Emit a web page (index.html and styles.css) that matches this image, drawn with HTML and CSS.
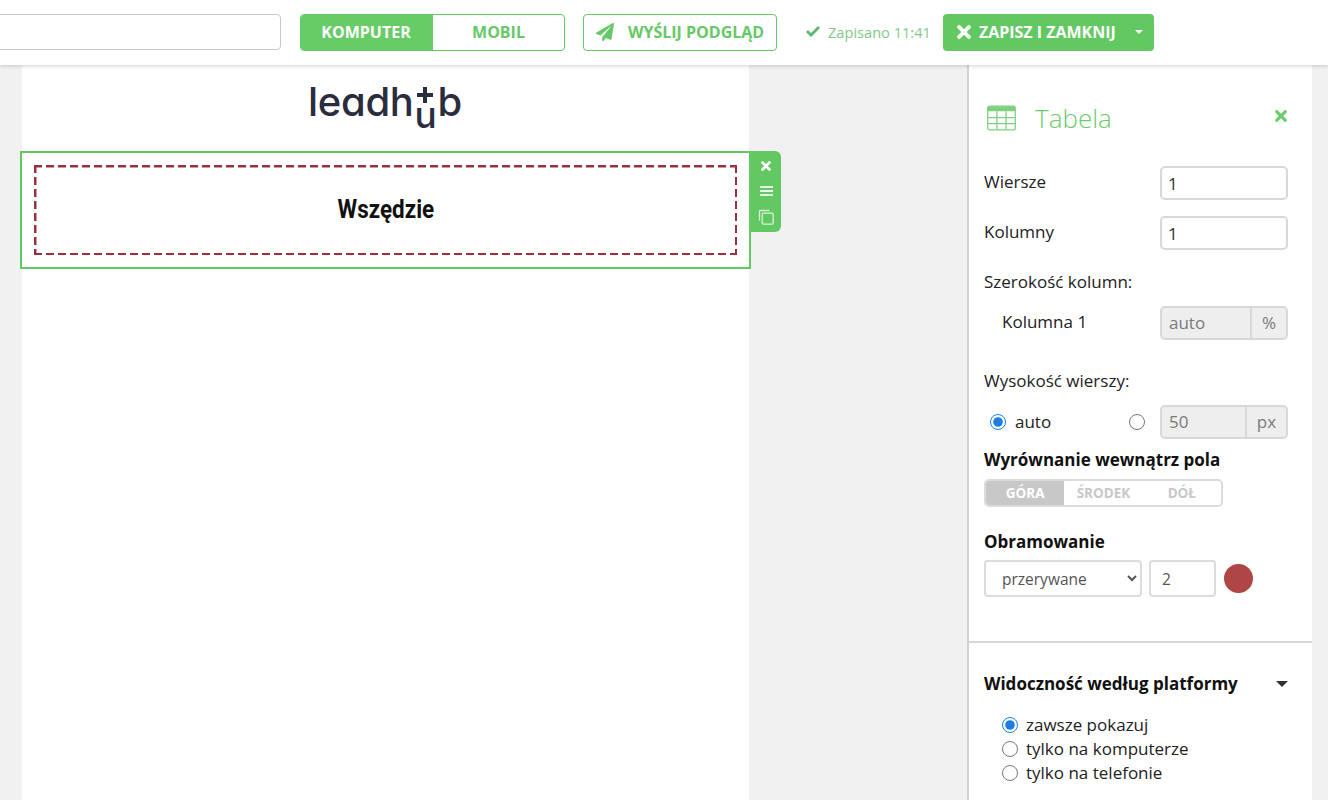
FILE: index.html
```html
<!DOCTYPE html>
<html lang="pl">
<head>
<meta charset="utf-8">
<title>Edytor</title>
<link rel="stylesheet" href="styles.css">
</head>
<body>
<header class="topbar">
  <input class="name-input" type="text" aria-label="Nazwa">
  <div class="switch">
    <span class="switch-item on">KOMPUTER</span>
    <span class="switch-item">MOBIL</span>
  </div>
  <button class="preview" type="button">
    <svg class="plane" viewBox="0 0 512 512"><path d="M476 3.200L12.500 270.600c-18.100 10.400-15.800 35.600 2.200 43.200L121 358.400l287.300-253.200c5.500-4.900 13.300 2.600 8.600 8.300L176 407v80.500c0 23.600 28.500 32.900 42.500 15.800L282 426l124.600 52.200c14.200 6 30.400-2.900 33-18.200l72-432C515 7.800 493.300-6.800 476 3.200z"/></svg>
    WYŚLIJ PODGLĄD
  </button>
  <span class="saved">
    <svg class="check" viewBox="0 0 16 13"><path d="M1 7l2-2 3 3 7-7 2 2-9 9z"/></svg>
    Zapisano 11:41
  </span>
  <div class="save">
    <svg class="x-icon" viewBox="0 80 352 352"><path d="M242.720 256l100.070-100.070c12.280-12.280 12.280-32.190 0-44.480l-22.240-22.240c-12.280-12.280-32.190-12.280-44.480 0L176 189.280 75.930 89.210c-12.280-12.280-32.190-12.280-44.480 0L9.210 111.450c-12.280 12.280-12.280 32.190 0 44.480L109.280 256 9.210 356.070c-12.280 12.280-12.280 32.190 0 44.480l22.240 22.240c12.280 12.280 32.200 12.280 44.480 0L176 322.720l100.070 100.070c12.280 12.280 32.200 12.280 44.480 0l22.240-22.240c12.280-12.280 12.280-32.190 0-44.480L242.720 256z"/></svg>
    <span class="save-label">ZAPISZ I ZAMKNIJ</span>
    <span class="caret"></span>
  </div>
</header>

<main class="stage">
  <section class="canvas">
    <div class="logo">
      <span>leadh</span>
      <span class="logo-hub"><i class="plus-h"></i><i class="plus-v"></i><span class="logo-u">u</span></span>
      <span>b</span>
    </div>
    <div class="block">
      <div class="cell"><span class="cell-text">Wszędzie</span></div>
      <div class="block-tools">
        <svg class="tool-x" viewBox="0 80 352 352"><path d="M242.720 256l100.070-100.070c12.280-12.280 12.280-32.190 0-44.480l-22.240-22.240c-12.280-12.280-32.190-12.280-44.480 0L176 189.280 75.930 89.210c-12.280-12.280-32.190-12.280-44.480 0L9.210 111.450c-12.280 12.280-12.280 32.190 0 44.480L109.280 256 9.210 356.070c-12.280 12.280-12.280 32.190 0 44.480l22.240 22.240c12.280 12.280 32.200 12.280 44.480 0L176 322.720l100.070 100.070c12.280 12.280 32.200 12.280 44.480 0l22.240-22.240c12.280-12.280 12.280-32.190 0-44.480L242.720 256z"/></svg>
        <svg class="tool-menu" viewBox="0 0 13 10"><path d="M0 0h13v2H0zM0 4h13v2H0zM0 8h13v2H0z"/></svg>
        <svg class="tool-copy" viewBox="0 0 16 16"><path d="M11.500 1.500H2.500a1 1 0 0 0-1 1v9" fill="none"/><rect x="4.200" y="4.200" width="11" height="11" rx="1.200" fill="none"/></svg>
      </div>
    </div>
  </section>

  <aside class="panel">
    <div class="panel-main">
      <div class="panel-head">
        <svg class="table-icon" viewBox="0 0 30 26">
          <rect x=".75" y=".75" width="28.500" height="24.500" rx="2" fill="none"/>
          <path d="M1 1h28v5H1z" class="fill"/>
          <path d="M1 12.500h28M1 18.800h28M10.300 6v19M19.700 6v19" fill="none"/>
        </svg>
        <h2 class="panel-title">Tabela</h2>
        <svg class="panel-close" viewBox="0 80 352 352"><path d="M242.720 256l100.070-100.070c12.280-12.280 12.280-32.190 0-44.480l-22.240-22.240c-12.280-12.280-32.190-12.280-44.480 0L176 189.280 75.930 89.210c-12.280-12.280-32.190-12.280-44.480 0L9.210 111.450c-12.280 12.280-12.280 32.190 0 44.480L109.280 256 9.210 356.070c-12.280 12.280-12.280 32.190 0 44.480l22.240 22.240c12.280 12.280 32.200 12.280 44.480 0L176 322.720l100.070 100.070c12.280 12.280 32.200 12.280 44.480 0l22.240-22.240c12.280-12.280 12.280-32.190 0-44.480L242.720 256z"/></svg>
      </div>

      <div class="row"><label class="row-label">Wiersze</label><input class="field" type="text" value="1"></div>
      <div class="row row-kol"><label class="row-label">Kolumny</label><input class="field" type="text" value="1"></div>
      <p class="label label-width">Szerokość kolumn:</p>
      <div class="row row-col1">
        <label class="row-label indent">Kolumna 1</label>
        <div class="addon addon-pct"><span class="addon-val">auto</span><span class="addon-unit">%</span></div>
      </div>
      <p class="label label-height">Wysokość wierszy:</p>
      <div class="row row-h">
        <label class="radio radio-auto"><input type="radio" name="h" checked>auto</label>
        <input class="radio-solo" type="radio" name="h" aria-label="px">
        <div class="addon addon-px"><span class="addon-val">50</span><span class="addon-unit">px</span></div>
      </div>
      <h3 class="heading h-align">Wyrównanie wewnątrz pola</h3>
      <div class="segment">
        <span class="seg on">GÓRA</span><span class="seg">ŚRODEK</span><span class="seg">DÓŁ</span>
      </div>
      <h3 class="heading h-border">Obramowanie</h3>
      <div class="border-row">
        <select class="border-select" aria-label="Styl"><option>przerywane</option></select>
        <input class="border-width" type="text" value="2" aria-label="Grubość">
        <span class="swatch"></span>
      </div>
    </div>
    <div class="panel-section">
      <div class="section-head">
        <h3 class="heading">Widoczność według platformy</h3>
        <span class="tri"></span>
      </div>
      <div class="radios">
        <label class="radio"><input type="radio" name="p" checked>zawsze pokazuj</label>
        <label class="radio"><input type="radio" name="p">tylko na komputerze</label>
        <label class="radio"><input type="radio" name="p">tylko na telefonie</label>
      </div>
    </div>
  </aside>
</main>
</body>
</html>
```
FILE: styles.css
```css
* { box-sizing: border-box; }
html, body { margin: 0; height: 800px; overflow: hidden; }
body {
  background: #f1f1f1;
  font-family: "Open Sans", sans-serif;
  color: #222;
  font-size: 17px;
}

/* top bar */
.topbar {
  position: relative;
  z-index: 2;
  height: 65px;
  background: #fff;
  box-shadow: 0 1px 4px rgba(0, 0, 0, .18);
  display: flex;
  align-items: center;
}
.name-input {
  width: 302px;
  height: 36px;
  margin-left: -21px;
  margin-top: -1px;
  border: 1px solid #c8c8c8;
  border-radius: 4px;
  background: #fff;
}
.switch {
  display: flex;
  width: 265px;
  height: 37px;
  margin-left: 19px;
  margin-top: -1px;
  border: 1px solid #66c866;
  border-radius: 4px;
  overflow: hidden;
}
.switch-item {
  flex: 1;
  display: flex;
  align-items: center;
  justify-content: center;
  font-weight: 700;
  font-size: 16px;
  color: #66c866;
}
.switch-item.on {
  flex: 0 0 132px;
  padding-right: 2px;
  background: #66cc66;
  color: #fff;
}
.preview {
  display: flex;
  align-items: center;
  width: 194px;
  height: 37px;
  margin-left: 18px;
  margin-top: -1px;
  padding: 0 0 0 12px;
  background: #fff;
  border: 1px solid #66c866;
  border-radius: 4px;
  font: 700 16px "Open Sans", sans-serif;
  color: #66c866;
  white-space: nowrap;
}
.plane { width: 18px; height: 18px; margin-right: 14px; fill: #66c866; flex: none; }
.saved {
  display: flex;
  align-items: center;
  margin-left: 28px;
  margin-top: -2px;
  font-size: 14.600px;
  color: #7fc98a;
  white-space: nowrap;
}
.check { width: 16px; height: 13px; margin-right: 7px; fill: #5cb870; }
.save {
  display: flex;
  align-items: center;
  width: 211px;
  height: 37px;
  margin-left: 12px;
  margin-top: -1px;
  padding-left: 14px;
  background: #62c862;
  border-radius: 4px;
  color: #fff;
  font-weight: 700;
  font-size: 16px;
}
.x-icon { width: 14px; height: 14px; fill: #fff; margin-right: 8px; flex: none; }
.save-label { white-space: nowrap; }
.caret {
  margin-left: auto;
  margin-right: 11px;
  border: 4.500px solid transparent;
  border-top-color: #fff;
  border-bottom: 0;
}

/* stage */
.stage {
  display: flex;
  height: 735px;
  padding-left: 22px;
}
.canvas {
  width: 727px;
  height: 100%;
  background: #fff;
}
.logo {
  display: flex;
  justify-content: center;
  align-items: flex-start;
  height: 86px;
  padding-top: 12px;
  padding-right: 1px;
  font-family: "Inter", sans-serif;
  font-feature-settings: "cv11";
  font-weight: 500;
  font-size: 40px;
  letter-spacing: -.3px;
  line-height: 50px;
  color: #2b2d3e;
}
.logo-hub { position: relative; width: 24px; height: 50px; }
.logo-u { display: block; text-align: center; font-size: 37px; transform: translateY(13px); }
.plus-h { position: absolute; left: 3px; top: 16px; width: 16px; height: 3.500px; background: #2b2d3e; }
.plus-v { position: absolute; left: 9.500px; top: 10px; width: 3.500px; height: 16px; background: #2b2d3e; }

.block {
  position: relative;
  width: 731px;
  height: 118px;
  margin-left: -2px;
  padding: 12px;
  border: 2px solid #62c862;
}
.cell {
  height: 90px;
  padding-bottom: 2px;
  --dash: #9a3040;
  background:
    repeating-linear-gradient(90deg, var(--dash) 0 8px, transparent 8px 12px) left top / 100% 2.500px no-repeat,
    repeating-linear-gradient(90deg, var(--dash) 0 8px, transparent 8px 12px) left bottom / 100% 2.500px no-repeat,
    repeating-linear-gradient(180deg, var(--dash) 0 8px, transparent 8px 12px) left top / 2.500px 100% no-repeat,
    repeating-linear-gradient(180deg, var(--dash) 0 8px, transparent 8px 12px) right top / 2.500px 100% no-repeat;
  display: flex;
  align-items: center;
  justify-content: center;
  font-family: "Roboto", sans-serif;
  font-weight: 700;
  font-size: 25.500px;
  color: #111;
}
.cell-text { display: block; transform: scaleX(.88); }
.block-tools {
  position: absolute;
  left: 729px;
  top: -2px;
  width: 30px;
  height: 81px;
  background: #62c862;
  border-radius: 0 6px 6px 0;
  display: flex;
  flex-direction: column;
  align-items: center;
  padding-top: 10px;
}
.tool-x { width: 10px; height: 10px; fill: #fff; margin-bottom: 15px; flex: none; }
.tool-menu { width: 13px; height: 10px; fill: #e9f7e9; margin-bottom: 13px; flex: none; }
.tool-copy { width: 16px; height: 16px; stroke: #d8f2d8; stroke-width: 1.300; flex: none; }

/* side panel */
.panel {
  width: 345px;
  height: 100%;
  margin-left: 218px;
  background: #fff;
  border-left: 2px solid #d2d2d2;
  color: #222;
}
.panel-main { height: 578px; padding: 0 24px 0 15px; border-bottom: 2px solid #d8d8d8; }
.panel-head {
  display: flex;
  align-items: center;
  height: 101px;
  padding: 5px 0 0 3px;
}
.table-icon { width: 29px; height: 26px; stroke: #7fd07f; stroke-width: 1.300; flex: none; }
.table-icon .fill { fill: #7fd07f; stroke: none; }
.panel-title {
  margin: 0 0 0 19px;
  font-size: 26px;
  font-weight: 300;
  color: #6ccc6c;
}
.panel-close { width: 12px; height: 12px; margin-left: auto; margin-right: 1px; margin-top: -5px; fill: #6ccc6c; }
.row { display: flex; align-items: center; justify-content: space-between; height: 34px; }
.row-label { padding-bottom: 4px; }
.row-kol { margin-top: 16px; }
.field, .addon {
  width: 128px;
  height: 34px;
  border: 2px solid #d8d8d8;
  border-radius: 5px;
  background: #fff;
  font: 17px "Open Sans", sans-serif;
  color: #333;
  padding: 0 6px;
}
.label { margin: 0; line-height: 24px; }
.label-width { margin-top: 20px; }
.row-col1 { margin-top: 12px; }
.indent { margin-left: 18px; }
.addon {
  display: flex;
  padding: 0;
  background: #eee;
  color: #7a7a7a;
  overflow: hidden;
}
.addon-val { flex: 1; display: flex; align-items: center; padding: 0 0 1px 7px; }
.addon-unit {
  display: flex;
  align-items: center;
  justify-content: center;
  width: 36px;
  padding-bottom: 1px;
  border-left: 2px solid #d8d8d8;
}
.addon-px .addon-unit { width: 41px; }
.label-height { margin-top: 29px; }
.row-h { margin-top: 12px; }
.radio { display: flex; align-items: center; gap: 9px; }
.radio input, .radio-solo {
  width: 16px;
  height: 16px;
  margin: 2px 0 0;
  accent-color: #1a7fe0;
  flex: none;
}
.radio-auto { margin-left: 6px; padding-bottom: 2px; }
.radio-solo { margin: 0 15px 0 auto; }
.heading { margin: 0; font-size: 17px; font-weight: 700; color: #111; line-height: 24px; }
.h-align { margin-top: 9px; }
.segment {
  display: flex;
  width: 239px;
  height: 28px;
  margin-top: 7px;
  border: 2px solid #dcdcdc;
  border-radius: 5px;
  overflow: hidden;
  font-size: 13.500px;
  font-weight: 700;
  color: #c8c8c8;
}
.seg { flex: 1; display: flex; align-items: center; justify-content: center; }
.seg.on { background: #c8c8c8; color: #fff; }
.h-border { margin-top: 23px; }
.border-row { display: flex; align-items: center; margin-top: 6px; }
.border-select {
  width: 158px;
  height: 37px;
  padding-left: 12px;
  border: 2px solid #dcdcdc;
  border-radius: 4px;
  background: #fff;
  font: 15.500px "Open Sans", sans-serif;
  color: #555;
}
.border-width {
  width: 67px;
  height: 37px;
  margin-left: 7px;
  padding: 0 11px;
  border: 2px solid #dcdcdc;
  border-radius: 4px;
  font: 15.500px "Open Sans", sans-serif;
  color: #555;
}
.swatch {
  width: 29px;
  height: 29px;
  margin-left: 8px;
  border-radius: 50%;
  background: #b04545;
}
.panel-section { padding: 0 24px 0 15px; }
.section-head {
  display: flex;
  align-items: center;
  justify-content: space-between;
  padding-top: 29px;
}
.tri {
  margin-right: 0;
  border: 6.500px solid transparent;
  border-top-color: #333;
  border-bottom: 0;
}
.radios {
  display: flex;
  flex-direction: column;
  margin-top: 16px;
  margin-left: 18px;
}
.radios .radio { height: 24px; gap: 8px; }
```
